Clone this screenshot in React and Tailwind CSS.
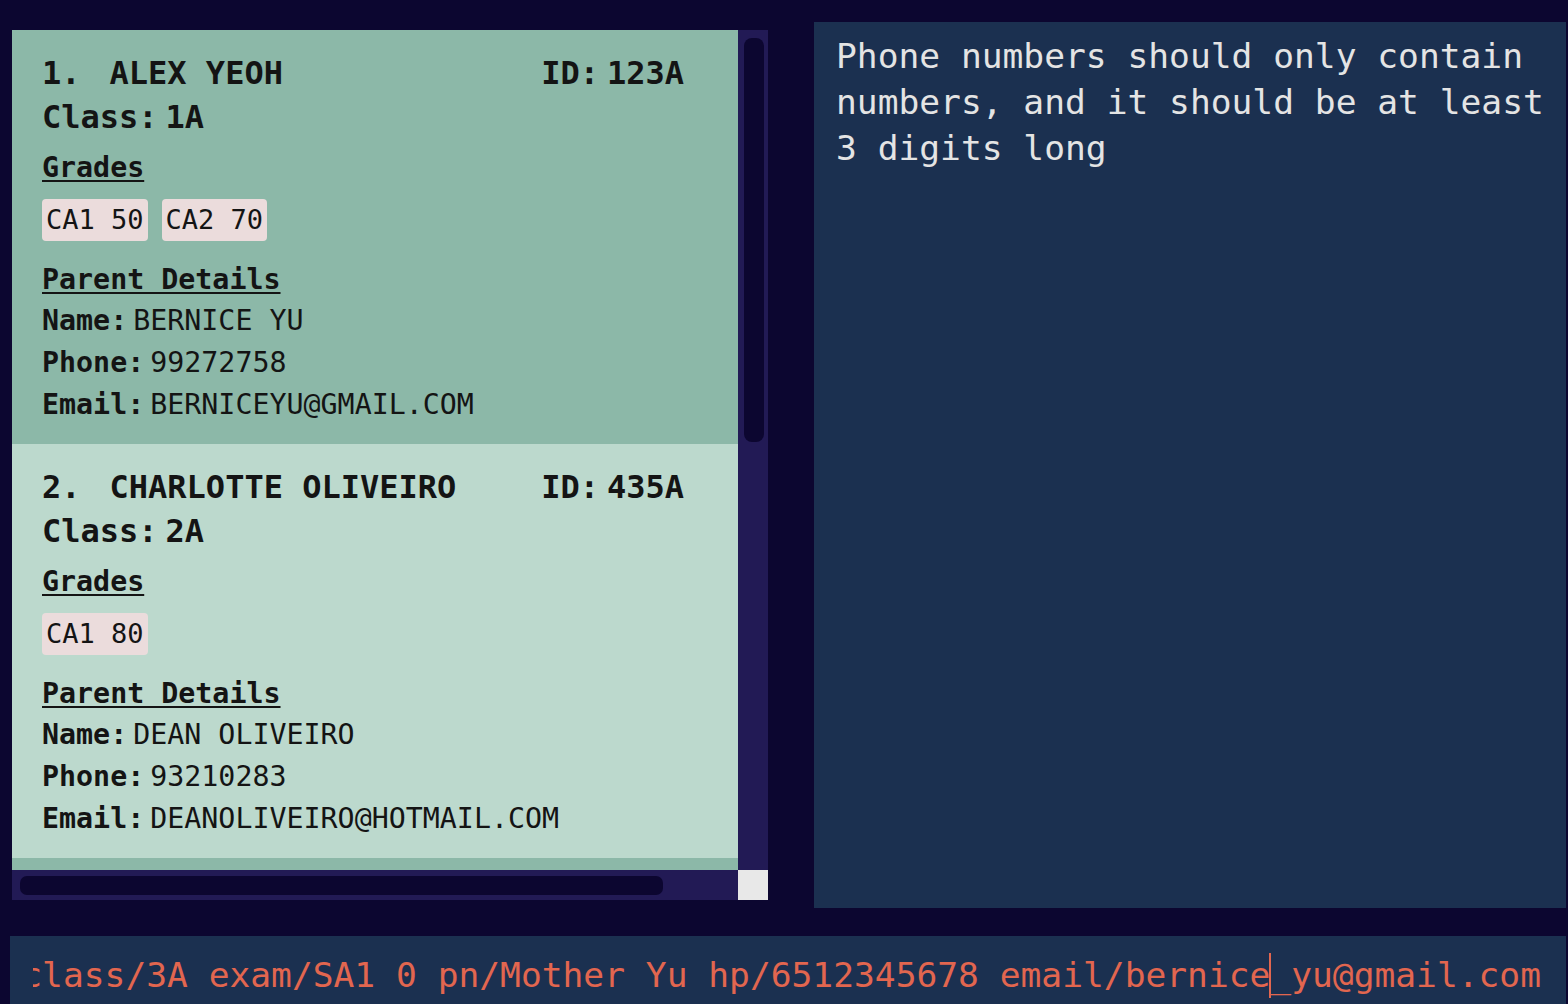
import React from "react";

const students = [
  {
    idx: "1.",
    name: "ALEX YEOH",
    id: "123A",
    cls: "1A",
    grades: ["CA1 50", "CA2 70"],
    pName: "BERNICE YU",
    phone: "99272758",
    email: "BERNICEYU@GMAIL.COM",
    bg: "bg-[#8cb8a8]",
  },
  {
    idx: "2.",
    name: "CHARLOTTE OLIVEIRO",
    id: "435A",
    cls: "2A",
    grades: ["CA1 80"],
    pName: "DEAN OLIVEIRO",
    phone: "93210283",
    email: "DEANOLIVEIRO@HOTMAIL.COM",
    bg: "bg-[#bcd9cd]",
  },
  {
    idx: "3.",
    name: "DAVID LI",
    id: "512B",
    cls: "3B",
    grades: ["CA1 65"],
    pName: "ROY LI",
    phone: "91031282",
    email: "ROYLI@EXAMPLE.COM",
    bg: "bg-[#8cb8a8]",
  },
];

function Card({ s }) {
  return (
    <div className={`${s.bg} h-[414px] shrink-0 pl-[30px] pr-[54px] pt-[22px] text-[#141414]`}>
      <div className="flex justify-between text-[32px] leading-[43px] font-bold">
        <div className="flex">
          <span className="mr-[29px]">{s.idx}</span>
          <span>{s.name}</span>
        </div>
        <div className="flex gap-[8px]">
          <span>ID:</span>
          <span>{s.id}</span>
        </div>
      </div>
      <div className="mt-[1px] flex gap-[8px] text-[32px] leading-[43px] font-bold">
        <span>Class:</span>
        <span>{s.cls}</span>
      </div>
      <div className="mt-[8px] text-[28.3px] leading-[42px] font-bold">
        <span className="underline decoration-2 underline-offset-[3px]">Grades</span>
      </div>
      <div className="mt-[10px] flex gap-[14px]">
        {s.grades.map((g) => (
          <span
            key={g}
            className="h-[42px] px-[4px] rounded-[4px] bg-[#ebdcdc] text-[27px] leading-[42px] whitespace-pre"
          >
            {g}
          </span>
        ))}
      </div>
      <div className="mt-[19px] text-[28.3px] leading-[40px] font-bold">
        <span className="underline decoration-2 underline-offset-[3px] whitespace-pre">Parent Details</span>
      </div>
      {[
        ["Name:", s.pName],
        ["Phone:", s.phone],
        ["Email:", s.email],
      ].map(([k, v]) => (
        <div key={k} className="flex gap-[6px] text-[28.3px] leading-[42px]">
          <span className="font-bold">{k}</span>
          <span className="whitespace-pre">{v}</span>
        </div>
      ))}
    </div>
  );
}

export default function App() {
  return (
    <div className="w-[1568px] h-[1004px] overflow-hidden bg-[#0c0630] font-['DejaVu_Sans_Mono','Liberation_Mono',monospace] flex flex-col">
      <div className="flex items-start pt-[22px] pl-[12px]">
        <div className="mt-[8px] w-[756px] h-[870px] grid grid-cols-[726px_30px] grid-rows-[840px_30px]">
          <div className="overflow-hidden flex flex-col">
            {students.map((s) => (
              <Card key={s.idx} s={s} />
            ))}
          </div>
          <div className="bg-[#221a55] pt-[8px] pl-[6px]">
            <div className="w-[20px] h-[404px] rounded-[8px] bg-[#0c0630]" />
          </div>
          <div className="bg-[#221a55] pt-[6px] pl-[8px]">
            <div className="w-[643px] h-[19px] rounded-[7px] bg-[#0c0630]" />
          </div>
          <div className="bg-[#e8e8e8]" />
        </div>
        <div className="ml-[46px] w-[752px] h-[886px] bg-[#1b3050] pl-[22px] pr-[12px] pt-[11px]">
          <p className="text-[34.6px] leading-[46px] text-[#e4e4e4] font-light">
            Phone numbers should only contain numbers, and it should be at least 3 digits long
          </p>
        </div>
      </div>
      <div className="mt-[28px] ml-[10px] w-[1556px] h-[80px] bg-[#1b3050] pl-[23px] pr-[25px] pt-[16px]">
        <div className="overflow-hidden flex justify-end">
          <div className="whitespace-pre text-[34.6px] leading-[46px] text-[#e2664f] font-light">
            <span>add n/Alex Yeoh class/3A exam/SA1 0 pn/Mother Yu hp/6512345678 email/bernice</span>
            <span className="relative">
              <span className="absolute left-[-1px] top-[-2px] w-[2px] h-[45px] bg-[#e2664f]" />
            </span>
            <span>_yu@gmail.com</span>
          </div>
        </div>
      </div>
    </div>
  );
}
